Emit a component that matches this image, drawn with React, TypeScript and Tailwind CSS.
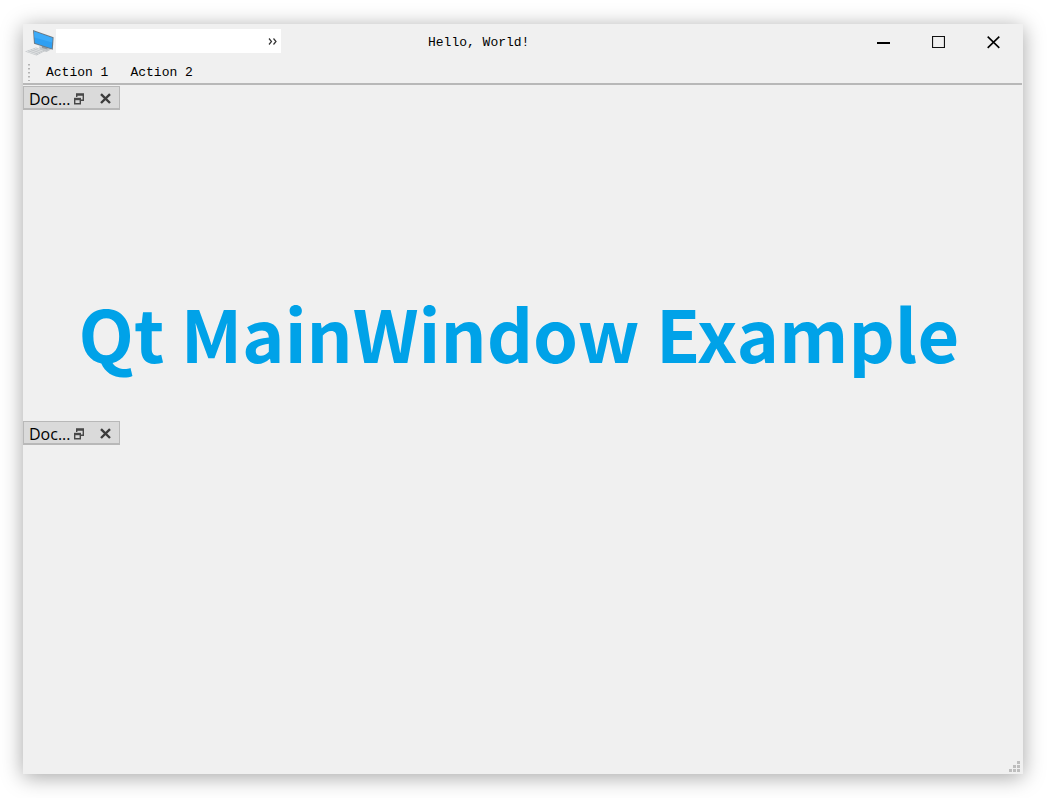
import React from "react";

function ComputerIcon() {
  return (
    <svg width="30" height="28" viewBox="0 0 30 28" aria-hidden="true">
      <path d="M14 18.5 L22 17.5 L26 21.5 L21.5 24 L15 22 Z" fill="#c3c7ca" />
      <path d="M17 17 L22.5 18.5 V21.5 L17 20 Z" fill="#959ca2" />
      <path d="M0 23.6 L11 19.4 L20 23 L11.5 27.6 Z" fill="#c2c5c8" />
      <path d="M1.5 23.2 L11.5 26.4 M4.2 22.2 L14 25.4 M7 21.1 L16.2 24.3 M9.6 20.2 L18 23.2" stroke="#e6e8e9" strokeWidth="0.8" />
      <path d="M8 2 L28.6 9.2 L27.8 21.8 L9 15.8 Z" fill="#6c7a85" />
      <path d="M9 3.4 L27.4 9.9 L26.8 20.6 L9.9 15 Z" fill="#2f9ff2" />
      <path d="M9 3.4 L27.4 9.9 L27.2 14.5 L9.5 9.6 Z" fill="#3dabf8" />
    </svg>
  );
}

function MenuBar() {
  return (
    <nav aria-label="Menu" className="flex h-6 w-[225px] items-center justify-end bg-white pr-[3px]">
      <button type="button" aria-label="More menus" className="flex h-6 w-3 items-center justify-center pt-px">
        <svg width="9" height="7" viewBox="0 0 9 7" fill="none" stroke="#333333" strokeWidth="1.2" aria-hidden="true">
          <path d="M1 0.5 L3.5 3.5 L1 6.5 M5.5 0.5 L8 3.5 L5.5 6.5" />
        </svg>
      </button>
    </nav>
  );
}

function WindowControls() {
  return (
    <div className="ml-auto flex h-full">
      <button type="button" aria-label="Minimize" className="flex w-[55px] items-center justify-center">
        <svg width="13" height="13" viewBox="0 0 13 13" aria-hidden="true">
          <path d="M0 6h13v2H0z" />
        </svg>
      </button>
      <button type="button" aria-label="Maximize" className="flex w-[55px] items-center justify-center">
        <svg width="13" height="13" viewBox="0 0 13 13" fill="none" stroke="#111111" aria-hidden="true">
          <path d="M0.5 0.5h12v11h-12z" strokeWidth="1.2" />
        </svg>
      </button>
      <button type="button" aria-label="Close" className="flex w-[55px] items-center justify-center">
        <svg width="13" height="13" viewBox="0 0 13 13" fill="none" stroke="#000000" aria-hidden="true">
          <path d="M0.7 0.7 L12.3 11.8 M12.3 0.7 L0.7 11.8" strokeWidth="1.6" />
        </svg>
      </button>
    </div>
  );
}

function DockTitle() {
  return (
    <header className="flex h-6 w-[97px] items-center border border-b-2 border-[#b8b8b8] bg-[#dadada] pt-[2px] pl-[5px]">
      <h2 className="w-11 font-['Open_Sans',sans-serif] text-[16px] leading-5 text-black">Doc...</h2>
      <button type="button" aria-label="Float" className="flex h-5 w-[11px] items-center justify-center">
        <svg width="11" height="12" viewBox="0 0 11 12" fill="none" stroke="#484848" strokeWidth="1.4" aria-hidden="true">
          <path d="M3.7 4 V1.5 H10.3 V7.3 H8" />
          <path d="M3 1.5 H11" strokeWidth="2.4" />
          <path d="M1.7 6 H7.3 V10.8 H1.7 Z" />
          <path d="M1 6 H8" strokeWidth="2.4" />
        </svg>
      </button>
      <button type="button" aria-label="Close dock" className="ml-4 flex h-5 w-[11px] items-center justify-center">
        <svg width="11" height="11" viewBox="0 0 11 11" fill="none" stroke="#3c3c3c" strokeWidth="2.4" aria-hidden="true">
          <path d="M1 1.2 L10 10 M10 1.2 L1 10" />
        </svg>
      </button>
    </header>
  );
}

function Grip() {
  return (
    <svg width="11" height="11" viewBox="0 0 11 11" fill="#bebebe" aria-hidden="true">
      <path d="M8 0h3v3H8zM4 4h3v3H4zM8 4h3v3H8zM0 8h3v3H0zM4 8h3v3H4zM8 8h3v3H8z" />
    </svg>
  );
}

export default function App() {
  return (
    <div className="flex min-h-screen bg-white py-6 pr-6 pl-[23px]">
      <div className="flex flex-1 flex-col bg-[#f0f0f0] font-['Liberation_Mono',monospace] text-[13px] leading-4 text-black shadow-[0_3px_20px_rgba(0,0,0,0.36)]">
        <div className="flex h-9 items-center pr-[2px] pl-[2px]">
          <ComputerIcon />
          <div className="ml-px self-start pt-[5px]">
            <MenuBar />
          </div>
          <h1 className="ml-[147px] pt-[2px] whitespace-nowrap">Hello, World!</h1>
          <WindowControls />
        </div>
        <div role="toolbar" aria-label="Actions" className="mr-px flex h-[25px] items-center border-b-2 border-[#b8b8b8]">
          <svg width="4" height="18" viewBox="0 0 4 18" className="ml-1" stroke="#b4b4b4" aria-hidden="true">
            <path d="M2 1 V18" strokeWidth="2" strokeDasharray="1.5 2.5" />
          </svg>
          <div className="flex pt-[2px] pl-1">
            <button type="button" className="h-5 px-[11px] whitespace-nowrap">Action 1</button>
            <button type="button" className="h-5 px-[11px] whitespace-nowrap">Action 2</button>
          </div>
        </div>
        <main className="flex flex-1 flex-col pt-px">
          <section className="flex flex-1 flex-col">
            <DockTitle />
            <div className="flex flex-1 flex-col items-center justify-end pr-2 pb-[49px]">
              <p className="font-['Noto_Sans_CJK_SC',sans-serif] text-[72px] leading-[80px] font-bold whitespace-nowrap text-[#00a2e8]">
                Qt MainWindow Example
              </p>
            </div>
          </section>
          <section className="flex flex-1 flex-col">
            <DockTitle />
          </section>
        </main>
        <footer className="flex h-[18px] items-end justify-end pr-[3px] pb-[2px]">
          <Grip />
        </footer>
      </div>
    </div>
  );
}
